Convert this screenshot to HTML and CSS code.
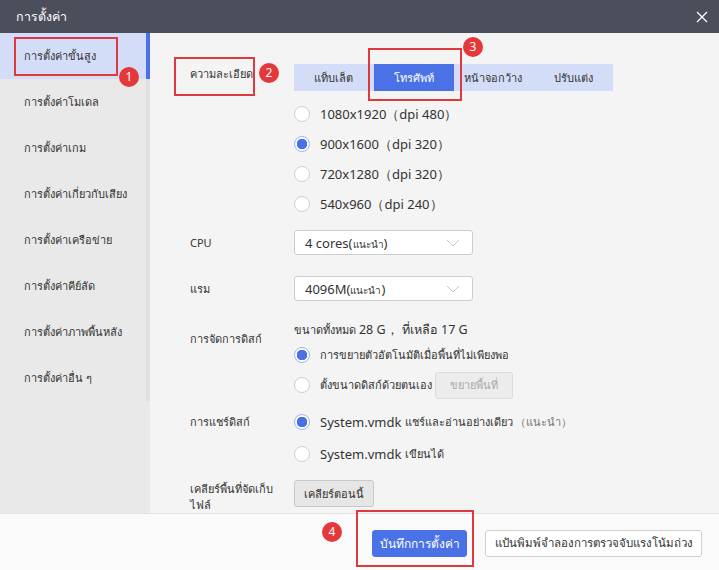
FILE: index.html
```html
<!DOCTYPE html>
<html lang="th">
<head>
  <meta charset="UTF-8">
  <title>การตั้งค่า</title>
  <link rel="stylesheet" href="styles.css">
</head>
<body>
  <div class="dialog">
    <div class="titlebar">
      <span class="title">การตั้งค่า</span>
      <svg class="close" width="12" height="12" viewBox="0 0 12 12"><path d="M1 1L11 11M11 1L1 11" stroke="#fff" stroke-width="1.3"/></svg>
    </div>
    <div class="content">
      <ul class="sidebar">
        <li class="active">การตั้งค่าขั้นสูง</li>
        <li>การตั้งค่าโมเดล</li>
        <li>การตั้งค่าเกม</li>
        <li>การตั้งค่าเกี่ยวกับเสียง</li>
        <li>การตั้งค่าเครือข่าย</li>
        <li>การตั้งค่าคีย์ลัด</li>
        <li>การตั้งค่าภาพพื้นหลัง</li>
        <li>การตั้งค่าอื่น ๆ</li>
      </ul>
      <div class="main">
        <div class="row">
          <div class="label label-tabs">ความละเอียด</div>
          <div class="control">
            <div class="tabs">
              <span>แท็บเล็ต</span>
              <span class="on">โทรศัพท์</span>
              <span>หน้าจอกว้าง</span>
              <span>ปรับแต่ง</span>
            </div>
            <div class="radios">
              <label class="radio"><i></i>1080x1920（dpi 480）</label>
              <label class="radio"><i class="checked"></i>900x1600（dpi 320）</label>
              <label class="radio"><i></i>720x1280（dpi 320）</label>
              <label class="radio"><i></i>540x960（dpi 240）</label>
            </div>
          </div>
        </div>
        <div class="row row-select">
          <div class="label">CPU</div>
          <div class="control">
            <div class="select"><span>4 cores(<small>แนะนำ</small>)</span><svg width="14" height="8" viewBox="0 0 14 8"><path d="M1 1L7 7L13 1" fill="none" stroke="#c8c8c8" stroke-width="1"/></svg></div>
          </div>
        </div>
        <div class="row row-select">
          <div class="label">แรม</div>
          <div class="control">
            <div class="select"><span>4096M(<small>แนะนำ</small>)</span><svg width="14" height="8" viewBox="0 0 14 8"><path d="M1 1L7 7L13 1" fill="none" stroke="#c8c8c8" stroke-width="1"/></svg></div>
          </div>
        </div>
        <div class="row row-disk">
          <div class="label label-disk">การจัดการดิสก์</div>
          <div class="control">
            <div class="info">ขนาดทั้งหมด <b>28 G， ที่เหลือ 17 G</b></div>
            <label class="radio small"><i class="checked"></i>การขยายตัวอัตโนมัติเมื่อพื้นที่ไม่เพียงพอ</label>
            <label class="radio small"><i></i>ตั้งขนาดดิสก์ด้วยตนเอง<span class="btn btn-disabled">ขยายพื้นที่</span></label>
          </div>
        </div>
        <div class="row row-share">
          <div class="label">การแชร์ดิสก์</div>
          <div class="control">
            <label class="radio"><i class="checked"></i>System.vmdk&nbsp;<small>แชร์และอ่านอย่างเดียว</small><em>（แนะนำ）</em></label>
            <label class="radio"><i></i>System.vmdk&nbsp;<small>เขียนได้</small></label>
          </div>
        </div>
        <div class="row row-clear">
          <div class="label">เคลียร์พื้นที่จัดเก็บไฟล์</div>
          <div class="control">
            <span class="btn">เคลียร์ตอนนี้</span>
          </div>
        </div>
      </div>
    </div>
    <div class="footer">
      <span class="btn btn-primary">บันทึกการตั้งค่า</span>
      <span class="btn btn-white">แป้นพิมพ์จำลองการตรวจจับแรงโน้มถ่วง</span>
    </div>

    <!-- annotations -->
    <div class="mark mark-1"></div>
    <div class="mark mark-2"></div>
    <div class="mark mark-3"></div>
    <div class="mark mark-4"></div>
    <span class="badge badge-1">1</span>
    <span class="badge badge-2">2</span>
    <span class="badge badge-3">3</span>
    <span class="badge badge-4">4</span>
  </div>
</body>
</html>
```

FILE: styles.css
```css
body {
  margin: 0;
  font-family: "Noto Sans", "Liberation Sans", sans-serif;
  font-size: 13px;
  color: #333;
}
.dialog {
  position: relative;
  width: 719px;
  height: 570px;
  display: flex;
  flex-direction: column;
  overflow: hidden;
  background-color: #f4f4f4;
}
.titlebar {
  height: 33px;
  flex: none;
  display: flex;
  align-items: center;
  justify-content: space-between;
  padding: 0 10px 0 16px;
  background-color: #4b4e5b;
  color: #fff;
}
.title {
  font-size: 12.5px;
}
.close {
  margin-right: 1px;
}
.content {
  flex: 1;
  display: flex;
  min-height: 0;
}
.sidebar {
  list-style: none;
  margin: 0;
  padding: 0;
  width: 150px;
  flex: none;
  background-color: #e9e9e9;
}
.sidebar li {
  height: 46px;
  display: flex;
  align-items: center;
  padding-left: 24px;
  border-right: 4px solid #e2e2e2;
  font-size: 11px;
  box-sizing: border-box;
  white-space: nowrap;
}
.sidebar li.active {
  background-color: #d4ddf8;
  border-right-color: #4a72e6;
}
.main {
  flex: 1;
  padding: 31px 0 0 40px;
  overflow: hidden;
}
.row {
  display: flex;
}
.label {
  width: 100px;
  margin-right: 4px;
  flex: none;
  font-size: 11px;
  line-height: 17px;
}
.label-tabs {
  padding-top: 1px;
  line-height: 18px;
  white-space: nowrap;
}
.control {
  flex: 1;
}
.tabs {
  display: flex;
  width: 319px;
  height: 27px;
  background-color: #d4ddf8;
  font-size: 11px;
}
.tabs span {
  width: 80px;
  display: flex;
  align-items: center;
  justify-content: center;
  white-space: nowrap;
}
.tabs .on {
  background-color: #4a72e6;
  color: #fff;
}
.radios {
  padding-top: 8px;
}
.radio {
  display: flex;
  align-items: center;
  height: 30px;
  font-size: 13px;
  white-space: nowrap;
}
.radio i {
  width: 14px;
  height: 14px;
  border: 1px solid #cfcfcf;
  border-radius: 50%;
  background-color: #fff;
  margin-right: 10px;
  flex: none;
}
.radio i.checked {
  border-color: #9fb4f0;
  background: radial-gradient(circle, #4a72e6 0 5px, #fff 5.5px);
}
.radio small {
  font-size: 11px;
}
.radio em {
  font-style: normal;
  font-size: 11px;
  color: #777;
  margin-left: 2px;
}
.row-select {
  align-items: center;
  margin-top: 11px;
}
.row-select + .row-select {
  margin-top: 21px;
}
.select {
  width: 179px;
  height: 25px;
  box-sizing: border-box;
  border: 1px solid #cdcdcd;
  border-radius: 3px;
  background-color: #fff;
  display: flex;
  align-items: center;
  justify-content: space-between;
  padding: 0 12px 0 10px;
  font-size: 13px;
}
.select small {
  font-size: 10px;
}
.row-disk {
  margin-top: 20px;
}
.label-disk {
  padding-top: 9px;
}
.info {
  font-size: 11px;
  height: 17px;
  line-height: 17px;
  margin-bottom: 2px;
}
.info b {
  font-weight: normal;
  font-size: 12.5px;
}
.radio.small {
  font-size: 11px;
}
.btn {
  display: inline-flex;
  align-items: center;
  justify-content: center;
  height: 27px;
  box-sizing: border-box;
  border: 1px solid #c8c8c8;
  border-radius: 3px;
  background-color: #e6e6e6;
  padding: 0;
  font-size: 11px;
  white-space: nowrap;
}
.btn-disabled {
  margin-left: 3px;
  width: 78px;
  background-color: #ececec;
  border-color: #dcdcdc;
  color: #aaa;
}
.row-share {
  margin-top: 6px;
}
.row-share .label {
  padding-top: 7px;
}
.row-share .radio {
  height: 32px;
}
.row-clear {
  margin-top: 10px;
}
.row-clear .label {
  padding-top: 1px;
  line-height: 16px;
}
.row-clear .btn {
  width: 80px;
}
.footer {
  height: 57px;
  flex: none;
  box-sizing: border-box;
  border-top: 1px solid #e2e2e2;
  background-color: #fafafa;
  display: flex;
  align-items: center;
  justify-content: flex-end;
  gap: 18px;
  padding: 2px 17px 0 0;
}
.btn-primary {
  width: 95px;
  background-color: #4a72e6;
  border-color: #4a72e6;
  color: #fff;
  font-size: 12px;
}
.btn-white {
  width: 217px;
  background-color: #fff;
  border-color: #cfcfcf;
  font-size: 11.5px;
}
.mark {
  position: absolute;
  border: 2px solid #dc3a3e;
  box-sizing: border-box;
}
.mark-1 { left: 14px; top: 37px; width: 104px; height: 39px; }
.mark-2 { left: 174px; top: 57px; width: 81px; height: 39px; }
.mark-3 { left: 368px; top: 48px; width: 94px; height: 53px; }
.mark-4 { left: 356px; top: 510px; width: 118px; height: 57px; }
.badge {
  position: absolute;
  width: 20px;
  height: 20px;
  margin: -10px 0 0 -10px;
  border-radius: 50%;
  background-color: #e5383b;
  color: #fff;
  font-size: 12px;
  line-height: 20px;
  text-align: center;
}
.badge-1 { left: 129px; top: 77px; }
.badge-2 { left: 269px; top: 73px; }
.badge-3 { left: 473px; top: 47px; }
.badge-4 { left: 332px; top: 532px; }
```
